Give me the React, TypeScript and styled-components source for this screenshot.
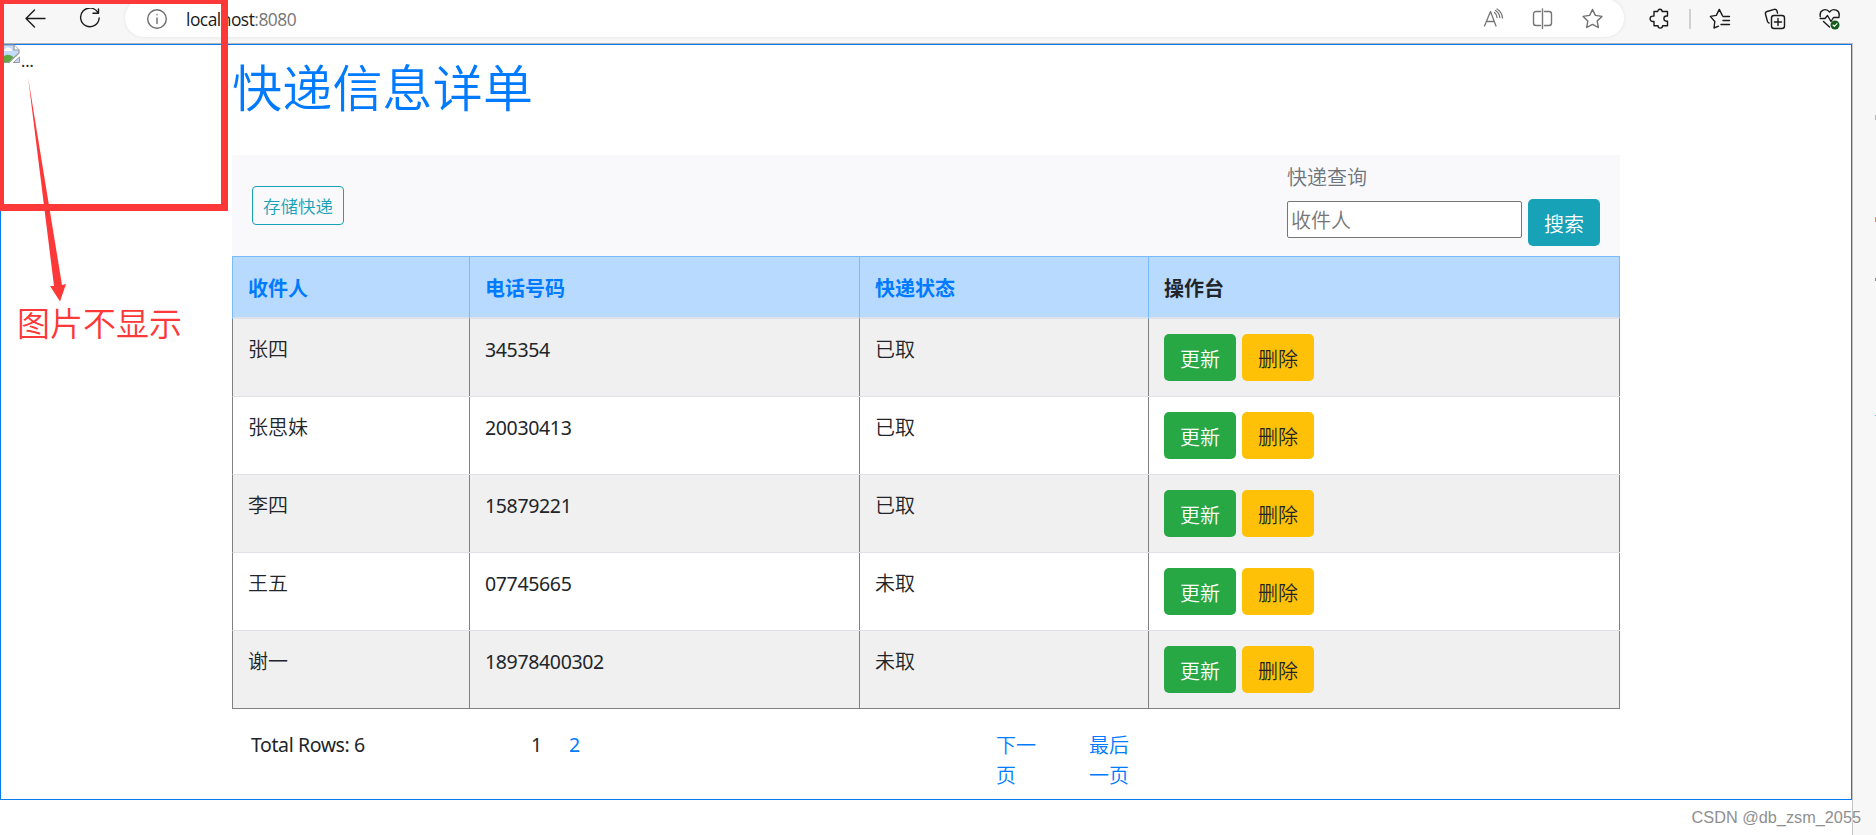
import React from "react";
import styled, { createGlobalStyle } from "styled-components";

const Global = createGlobalStyle`
  * { box-sizing: border-box; }
  body {
    margin: 0;
    background: #fff;
    color: #212529;
    font-family: "Noto Sans", "Noto Sans CJK SC", sans-serif;
    font-size: 20px;
    line-height: 30px;
    overflow: hidden;
  }
`;

const Screen = styled.div`
  position: relative;
  display: flex;
  flex-direction: column;
  width: 1876px;
  height: 835px;
  overflow: hidden;
`;

const BrowserBar = styled.header`
  display: flex;
  height: 43px;
  flex: none;
  padding-left: 25px;
  background: #f7f7f7;
`;

const Glyph = styled.svg<{ $gap?: number; $color?: string }>`
  display: block;
  flex: none;
  width: 22px;
  height: 22px;
  margin: 8px 0 0 ${(p) => p.$gap ?? 0}px;
  fill: none;
  stroke: ${(p) => p.$color ?? "#1b1b1b"};
  stroke-width: 1.4;
  stroke-linecap: round;
  stroke-linejoin: round;
`;

const AddressBar = styled.div`
  display: flex;
  width: 1499px;
  height: 38px;
  margin: -1px 0 0 24px;
  padding: 0 20px 0 21px;
  border-radius: 19px;
  background: #fff;
  box-shadow: 0 0 4px rgba(0, 0, 0, 0.08);
  ${Glyph} { margin-top: 9px; }
`;

const Url = styled.div`
  flex: 1;
  margin-left: 18px;
  color: #767676;
  font-family: "Open Sans", sans-serif;
  font-size: 17.4px;
  letter-spacing: -0.5px;
  line-height: 40px;
  b { color: #1a1a1a; font-weight: 400; }
`;

const BarDivider = styled.span`
  width: 2px;
  height: 20px;
  margin: 9px 0 0 18px;
  background: #d0d0d0;
`;

const Body = styled.div`
  display: flex;
  flex: 1;
`;

const Viewport = styled.div`
  width: 1853px;
  border-top: 1px solid #b5b5b5;
  border-right: 1px solid #c4c4c4;
  background: #fff;
`;

const Page = styled.main`
  display: flex;
  height: 756px;
  border: 1px solid #087bf0;
`;

const ImageColumn = styled.aside`
  display: flex;
  flex: none;
  width: 231px;
`;

const BrokenImage = styled.svg`
  width: 19px;
  height: 19px;
  margin-top: -1px;
`;

const AltText = styled.span`
  margin-left: 1px;
  font-size: 16px;
  line-height: 32px;
`;

const Content = styled.section`
  width: 1388px;
`;

const Title = styled.h1`
  height: 110px;
  margin: 0;
  color: #007bff;
  font-family: "Noto Sans CJK SC", sans-serif;
  font-size: 50px;
  font-weight: 350;
  letter-spacing: 0.2px;
  line-height: 80px;
`;

const Toolbar = styled.div`
  display: flex;
  justify-content: space-between;
  height: 101px;
  padding: 0 20px;
  background: #f9f9fb;
`;

const StoreButton = styled.button`
  width: 92px;
  height: 39px;
  margin-top: 31px;
  padding: 0;
  border: 1px solid #17a2b8;
  border-radius: 4px;
  background: transparent;
  color: #17a2b8;
  font: 350 17.5px/35px "Noto Sans CJK SC", sans-serif;
`;

const Search = styled.form`
  width: 313px;
`;

const SearchLabel = styled.label`
  display: block;
  padding-top: 8px;
  height: 44px;
  color: #6c757d;
  font-weight: 350;
`;

const SearchLine = styled.div`
  display: flex;
  justify-content: space-between;
`;

const SearchInput = styled.input`
  width: 235px;
  height: 37px;
  margin-top: 2px;
  padding: 1px 3px;
  border: 1px solid #767676;
  border-radius: 2px;
  background: #fff;
  font: 350 20px "Noto Sans CJK SC", sans-serif;
  &::placeholder { color: #757575; opacity: 1; }
`;

const tones = {
  info: ["#17a2b8", "#fff"],
  success: ["#28a745", "#fff"],
  warning: ["#ffc107", "#212529"],
};

const Button = styled.button<{ $tone: keyof typeof tones }>`
  width: 72px;
  height: 47px;
  padding: 2px 0 0;
  border: 0;
  border-radius: 5px;
  background: ${(p) => tones[p.$tone][0]};
  color: ${(p) => tones[p.$tone][1]};
  font: 350 20px/30px "Noto Sans CJK SC", sans-serif;
`;

const columns = "237px 390px 289px 471px";

const Table = styled.div`
  border-bottom: 1px solid #808080;
`;

const HeadRow = styled.div`
  display: grid;
  grid-template-columns: ${columns};
  height: 63px;
  border: solid #7abaff;
  border-width: 1px 0 0 1px;
  background: #b8daff;
`;

const HeadCell = styled.div<{ $plain?: boolean }>`
  padding: 16px 15px 0;
  border-right: 1px solid #7abaff;
  box-shadow: inset 0 -2px #dee2e6;
  color: ${(p) => (p.$plain ? "#212529" : "#007bff")};
  font-family: "Noto Sans CJK SC", sans-serif;
  font-weight: 700;
`;

const Row = styled.div`
  display: grid;
  grid-template-columns: ${columns};
  height: 78px;
  border-left: 1px solid #808080;
  border-bottom: 1px solid #dee2e6;
  background: #fff;
  &:nth-child(even) { background: #f0f0f0; }
  &:last-child { height: 77px; border-bottom: 0; }
`;

const Cell = styled.div<{ $digits?: boolean }>`
  padding: 16px 15px 0;
  border-right: 1px solid #808080;
  font-weight: ${(p) => (p.$digits ? 400 : 350)};
  font-size: ${(p) => (p.$digits ? 19.5 : 20)}px;
  letter-spacing: ${(p) => (p.$digits ? "-0.35px" : "0")};
`;

const ActionCell = styled.div`
  display: flex;
  gap: 6px;
  padding: 15px 15px 0;
  border-right: 1px solid #808080;
`;

const Pager = styled.footer`
  display: flex;
  padding: 21px 0 0 19px;
  font-size: 19.5px;
  letter-spacing: -0.4px;
`;

const Total = styled.span`
  width: 280px;
`;

const PageNo = styled.a<{ $active?: boolean }>`
  width: 38px;
  color: ${(p) => (p.$active ? "#212529" : "#007bff")};
`;

const PageStep = styled.a<{ $gap: number }>`
  width: 42px;
  margin: 1px 0 0 ${(p) => p.$gap}px;
  color: #007bff;
  font-size: 20px;
  font-weight: 350;
  letter-spacing: 0;
`;

const EdgeSidebar = styled.aside`
  display: flex;
  flex: 1;
  flex-direction: column;
  align-items: flex-end;
  background: #f7f7f7;
`;

const Tick = styled.i<{ $top: number; $size: number; $color: string }>`
  width: 1px;
  height: ${(p) => p.$size}px;
  margin-top: ${(p) => p.$top}px;
  background: ${(p) => p.$color};
`;

const RedFrame = styled.div`
  position: absolute;
  top: 0;
  left: 0;
  width: 228px;
  height: 211px;
  border: solid #fd3838;
  border-width: 4px 7px 7px 4px;
`;

const RedArrow = styled.svg`
  position: absolute;
  top: 77px;
  left: 27px;
  width: 40px;
  height: 226px;
  fill: #fd3838;
`;

const RedNote = styled.div`
  position: absolute;
  top: 300px;
  left: 17px;
  color: #fd3838;
  font-size: 33px;
  font-weight: 350;
  line-height: 48px;
`;

const Watermark = styled.div`
  position: absolute;
  top: 805px;
  right: 15px;
  color: #8f8f8f;
  font: 16.3px/24px "Liberation Sans", sans-serif;
  text-shadow: 1px 1px #fff;
`;

const shipments = [
  ["张四", "345354", "已取"],
  ["张思妹", "20030413", "已取"],
  ["李四", "15879221", "已取"],
  ["王五", "07745665", "未取"],
  ["谢一", "18978400302", "未取"],
];

export default function App() {
  return (
    <Screen>
      <Global />
      <BrowserBar>
        <Glyph viewBox="0 0 22 22"><path d="M20 10.5H1M9.5 2 1 10.5 9.5 19" /></Glyph>
        <Glyph $gap={32} viewBox="0 0 22 22"><path d="M14 5.3h5.5V1M19.3 5.3A9.3 9.3 0 1 0 20.2 10" /></Glyph>
        <AddressBar>
          <Glyph $color="#6e6e6e" viewBox="0 0 22 22">
            <circle cx="11" cy="11" r="9.3" /><path d="M11 10v5.5M11 6.5v.2" />
          </Glyph>
          <Url><b>localhost</b>:8080</Url>
          <Glyph $color="#767676" viewBox="0 0 22 22">
            <path d="M1.5 18 7.5 3.5 13 18M3.5 13.5h7.5M11.5 4.5q2.5 2 2.500 5M12.500 2.500q4 2.500 4.300 7M14 1q5 3 5.500 9" strokeWidth="1.3" />
          </Glyph>
          <Glyph $gap={27} $color="#767676" viewBox="0 0 22 22">
            <path d="M8.5 3.5H4A2.5 2.5 0 0 0 1.500 6v9A2.5 2.5 0 0 0 4 17.5h4.5M12.5 3.5H17A2.5 2.5 0 0 1 19.5 6v9a2.5 2.5 0 0 1-2.5 2.5h-4.5M10.5 1v19.5" />
          </Glyph>
          <Glyph $gap={28} $color="#6e6e6e" viewBox="0 0 22 22">
            <path d="m10.5 1.5 2.9 5.900 6.500 1-4.700 4.600 1.100 6.500-5.800-3.100-5.800 3.100 1.100-6.500L1.100 8.400l6.500-1z" />
          </Glyph>
        </AddressBar>
        <Glyph $gap={25} viewBox="0 0 22 22">
          <path d="M5 3.5h3.700a2.200 2.200 0 0 1 4.400 0H18.500V8h-1a2.600 2.600 0 0 0 0 5.200h1v4.600h-4.900a2.300 2.300 0 0 1-4.600 0H5V13.500h-1.200a2.700 2.700 0 0 1 0-5.400H5z" />
        </Glyph>
        <BarDivider />
        <Glyph $gap={18} viewBox="0 0 22 22">
          <path d="M9.5 18.2 5 20l.8-6.500L1.300 8.400l6-1 3-6 3 6M14 8.500h6.500M14 12.500h6.500M12 16.500h8.500" />
        </Glyph>
        <Glyph $gap={33} viewBox="0 0 22 22">
          <rect x="7.5" y="7.5" width="13" height="13" rx="2.5" />
          <path d="M14 10.500v7M10.500 14h7M13.500 5 13 3a2.200 2.200 0 0 0-2.700-1.600L3 3.500a2.200 2.200 0 0 0-1.500 2.700l2 7.300q.5 1.300 1.500 1.500" />
        </Glyph>
        <Glyph $gap={33} viewBox="0 0 22 22">
          <path d="M1.300 8.500C0 2 7-.5 10.500 4 14-.5 21.500 2 20 8.500M1.200 10.500H6l2.500-3 3.500 6 2.500-4h5.500M4.500 13.500l6 5.500" />
          <circle cx="16" cy="17" r="4.5" fill="#145c1d" stroke="none" />
          <path d="m14 17 1.400 1.300 2.600-2.600" stroke="#fff" strokeWidth="1.1" />
        </Glyph>
      </BrowserBar>
      <Body>
        <Viewport>
          <Page>
            <ImageColumn>
              <BrokenImage viewBox="0 0 19 19">
                <path d="M0 1h13l5 5v3L8 18.5H0z" fill="#c3dcfb" stroke="#999" strokeWidth="1.2" />
                <path d="M13 1v5h5" fill="#fff" stroke="#999" strokeWidth="1.2" />
                <path d="M2 7q0-2 2.500-2 1.500-3 4-1 2.500 0 2.500 3z" fill="#fff" />
                <path d="M0 17c1-4 5-7 8-6 2 0 3 1 4.500 2L8 18H0z" fill="#60a744" />
                <path d="m12.500 18.500 6-5.500v5.500z" fill="#c3dcfb" stroke="#999" />
              </BrokenImage>
              <AltText>...</AltText>
            </ImageColumn>
            <Content>
              <Title>快递信息详单</Title>
              <Toolbar>
                <StoreButton>存储快递</StoreButton>
                <Search>
                  <SearchLabel htmlFor="recipient">快递查询</SearchLabel>
                  <SearchLine>
                    <SearchInput id="recipient" placeholder="收件人" />
                    <Button type="button" $tone="info">搜索</Button>
                  </SearchLine>
                </Search>
              </Toolbar>
              <Table>
                <HeadRow>
                  <HeadCell>收件人</HeadCell>
                  <HeadCell>电话号码</HeadCell>
                  <HeadCell>快递状态</HeadCell>
                  <HeadCell $plain>操作台</HeadCell>
                </HeadRow>
                {shipments.map(([name, phone, state]) => (
                  <Row key={phone}>
                    <Cell>{name}</Cell>
                    <Cell $digits>{phone}</Cell>
                    <Cell>{state}</Cell>
                    <ActionCell>
                      <Button $tone="success">更新</Button>
                      <Button $tone="warning">删除</Button>
                    </ActionCell>
                  </Row>
                ))}
              </Table>
              <Pager>
                <Total>Total Rows: 6</Total>
                <PageNo $active>1</PageNo>
                <PageNo>2</PageNo>
                <PageStep $gap={389}>下一页</PageStep>
                <PageStep $gap={51}>最后一页</PageStep>
              </Pager>
            </Content>
          </Page>
        </Viewport>
        <EdgeSidebar>
          <Tick $top={72} $size={5} $color="#b3b3b3" />
          <Tick $top={97} $size={5} $color="#c79a32" />
          <Tick $top={56} $size={3} $color="#888" />
          <Tick $top={134} $size={1} $color="#6bbcc8" />
        </EdgeSidebar>
      </Body>
      <RedFrame />
      <RedArrow viewBox="0 0 40 226">
        <path d="M1 0 35 208 39 207 33 224.500 23 209 27 209z" />
      </RedArrow>
      <RedNote>图片不显示</RedNote>
      <Watermark>CSDN @db_zsm_2055</Watermark>
    </Screen>
  );
}
